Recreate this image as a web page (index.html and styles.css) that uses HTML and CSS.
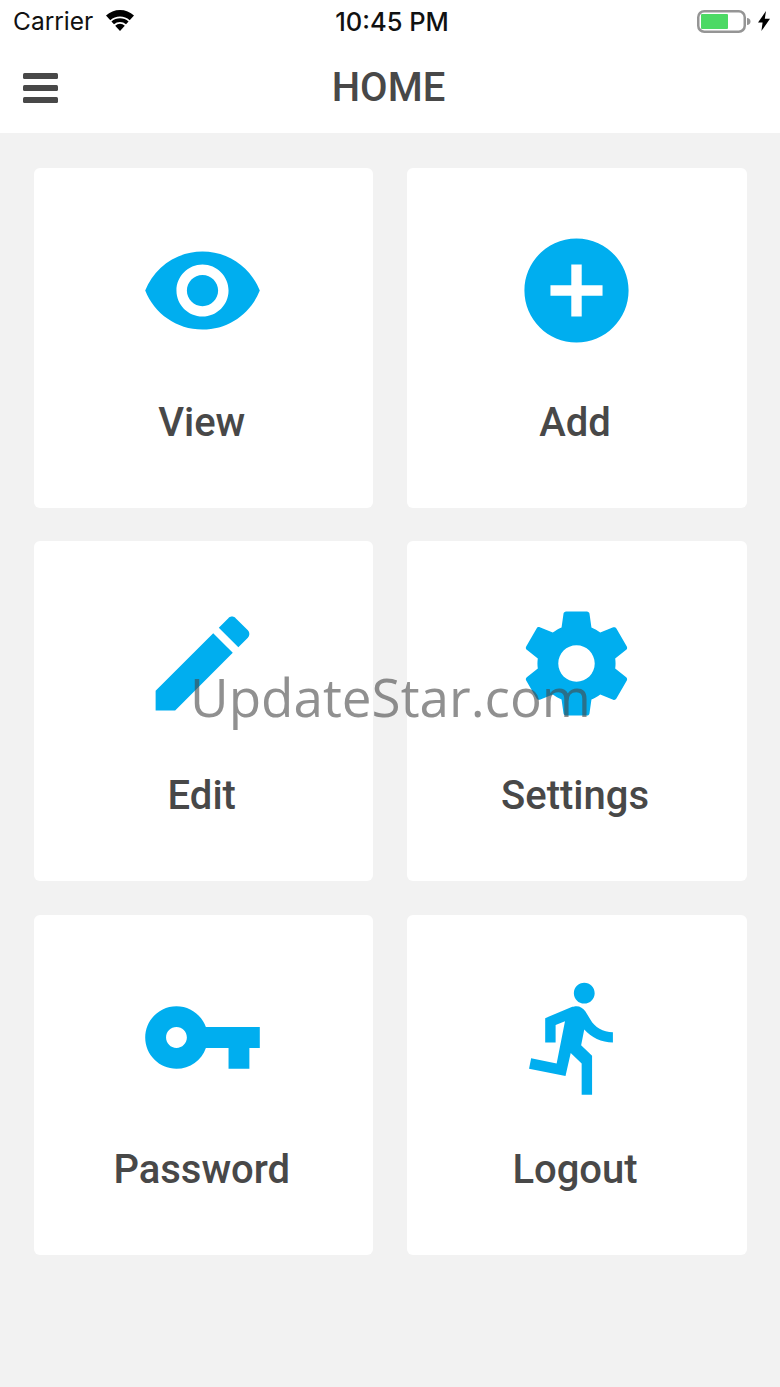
FILE: index.html
```html
<!DOCTYPE html>
<html lang="en">
<head>
    <meta charset="UTF-8">
    <meta name="viewport" content="width=device-width, initial-scale=1.0">
    <title>Home</title>
    <link rel="stylesheet" href="styles.css">
</head>
<body>
    <header class="top">
        <div class="status-bar">
            <div class="status-left">
                <span class="carrier">Carrier</span>
                <svg class="wifi" viewBox="0 0 28 21">
                    <path d="M14 21l-4.800-5.300a7 7 0 0 1 9.600 0z"/>
                    <path d="M8 14.300L5.400 11.400a13 13 0 0 1 17.200 0L20 14.300a9.200 9.200 0 0 0-12 0z"/>
                    <path d="M4.300 10.200L0 5.600a20.500 20.500 0 0 1 28 0l-4.300 4.600a14.800 14.800 0 0 0-19.400 0z"/>
                </svg>
            </div>
            <span class="clock">10:45 PM</span>
            <div class="status-right">
                <svg class="battery" viewBox="0 0 55 23">
                    <rect x="1.250" y="1.250" width="46.500" height="20.500" rx="6" fill="none" stroke="#959595" stroke-width="2.500"/>
                    <rect x="4" y="4" width="27" height="15" rx="1" fill="#4cd964"/>
                    <path d="M50 8c2 0 3.500 1.500 3.500 3.500S52 15 50 15z" fill="#959595"/>
                </svg>
                <svg class="bolt" viewBox="0 0 12 20">
                    <path d="M8 0L0 11.500h4.600L3.400 20 12 7.800H6.800z"/>
                </svg>
            </div>
        </div>
        <nav class="nav-bar">
            <svg class="menu-icon" viewBox="0 0 35 30">
                <rect y="0" width="35" height="6" rx="1.500"/>
                <rect y="12" width="35" height="6" rx="1.500"/>
                <rect y="24" width="35" height="6" rx="1.500"/>
            </svg>
            <h1>HOME</h1>
        </nav>
    </header>

    <main class="grid">
        <a class="tile">
            <svg class="tile-icon" viewBox="0 0 24 24"><path d="M12 4.500C7 4.500 2.730 7.610 1 12c1.730 4.390 6 7.500 11 7.500s9.270-3.110 11-7.500c-1.730-4.390-6-7.500-11-7.500zM12 17c-2.760 0-5-2.240-5-5s2.240-5 5-5 5 2.240 5 5-2.240 5-5 5zm0-8c-1.660 0-3 1.340-3 3s1.340 3 3 3 3-1.340 3-3-1.340-3-3-3z"/></svg>
            <span class="tile-label">View</span>
        </a>
        <a class="tile">
            <svg class="tile-icon" viewBox="0 0 24 24"><path d="M12 2C6.480 2 2 6.480 2 12s4.480 10 10 10 10-4.480 10-10S17.520 2 12 2zm5 11h-4v4h-2v-4H7v-2h4V7h2v4h4v2z"/></svg>
            <span class="tile-label">Add</span>
        </a>
        <a class="tile">
            <svg class="tile-icon" viewBox="0 0 24 24"><path d="M3 17.250V21h3.750L17.810 9.940l-3.750-3.750L3 17.250zM20.710 7.040c.39-.39.39-1.020 0-1.410l-2.340-2.340c-.39-.39-1.020-.39-1.410 0l-1.830 1.830 3.750 3.750 1.830-1.830z"/></svg>
            <span class="tile-label">Edit</span>
        </a>
        <a class="tile">
            <svg class="tile-icon" viewBox="0 0 24 24"><path d="M19.430 12.980c.04-.32.07-.64.07-.98s-.03-.66-.07-.98l2.110-1.650c.19-.15.24-.42.12-.64l-2-3.460c-.12-.22-.39-.3-.61-.22l-2.490 1c-.52-.4-1.080-.73-1.690-.98l-.38-2.650C14.460 2.180 14.250 2 14 2h-4c-.25 0-.46.18-.49.42l-.38 2.650c-.61.25-1.170.59-1.690.98l-2.490-1c-.23-.09-.49 0-.61.22l-2 3.460c-.13.22-.07.49.12.64l2.110 1.650c-.04.32-.07.65-.07.98s.03.66.07.98l-2.110 1.650c-.19.15-.24.42-.12.64l2 3.460c.12.22.39.3.61.22l2.490-1c.52.4 1.080.73 1.690.98l.38 2.650c.03.24.24.42.49.42h4c.25 0 .46-.18.49-.42l.38-2.650c.61-.25 1.170-.59 1.690-.98l2.490 1c.23.09.49 0 .61-.22l2-3.460c.12-.22.07-.49-.12-.64l-2.110-1.650zM12 15.500c-1.930 0-3.500-1.570-3.500-3.500s1.570-3.500 3.500-3.500 3.500 1.570 3.500 3.500-1.570 3.500-3.500 3.500z"/></svg>
            <span class="tile-label">Settings</span>
        </a>
        <a class="tile">
            <svg class="tile-icon" viewBox="0 0 24 24"><path d="M12.650 10C11.830 7.670 9.610 6 7 6c-3.310 0-6 2.690-6 6s2.690 6 6 6c2.610 0 4.830-1.670 5.650-4H17v4h4v-4h2v-4H12.650zM7 14c-1.100 0-2-.9-2-2s.9-2 2-2 2 .9 2 2-.9 2-2 2z"/></svg>
            <span class="tile-label">Password</span>
        </a>
        <a class="tile">
            <svg class="tile-icon" viewBox="0 0 24 24"><path d="M13.490 5.480c1.100 0 2-.9 2-2s-.9-2-2-2-2 .9-2 2 .9 2 2 2zm-3.600 13.900l1-4.400 2.100 2v6h2v-7.500l-2.100-2 .6-3c1.300 1.500 3.300 2.500 5.500 2.500v-2c-1.900 0-3.500-1-4.300-2.400l-1-1.600c-.4-.6-1-1-1.700-1-.3 0-.5.1-.8.1l-5.200 2.200v4.700h2v-3.400l1.800-.7-1.600 8.100-4.900-1-.4 2 7 1.400z"/></svg>
            <span class="tile-label">Logout</span>
        </a>
    </main>

    <div class="watermark">UpdateStar.com</div>
</body>
</html>
```

FILE: styles.css
```css
* {
    box-sizing: border-box;
}
body {
    margin: 0;
    min-height: 100vh;
    background: #f2f2f2;
    font-family: Roboto, "Liberation Sans", sans-serif;
    color: #484848;
    position: relative;
}
.top {
    background: #fff;
    height: 133px;
}
.status-bar {
    height: 44px;
    display: flex;
    align-items: center;
    justify-content: space-between;
    position: relative;
    padding: 0 10px 2px 13px;
    color: #111;
    font-family: Inter, "Liberation Sans", sans-serif;
}
.status-left {
    display: flex;
    align-items: center;
    gap: 13px;
}
.carrier {
    font-size: 24.500px;
}
.wifi {
    width: 28px;
    height: 21px;
    margin-bottom: 2px;
}
.clock {
    position: absolute;
    left: 0;
    right: -4px;
    text-align: center;
    font-size: 25.500px;
    font-weight: 500;
}
.status-right {
    display: flex;
    align-items: center;
    gap: 6px;
}
.battery {
    width: 55px;
    height: 23px;
}
.bolt {
    width: 12px;
    height: 20px;
}
.nav-bar {
    height: 87px;
    display: flex;
    align-items: center;
    justify-content: center;
    position: relative;
    padding-right: 3px;
}
.nav-bar h1 {
    margin: 0;
    font-size: 40px;
    font-weight: 500;
}
.menu-icon {
    position: absolute;
    left: 23px;
    top: 29px;
    width: 35px;
    height: 30px;
    fill: #484848;
}
.grid {
    display: grid;
    grid-template-columns: 339.500px 340px;
    grid-auto-rows: 340px;
    column-gap: 33.500px;
    row-gap: 33.500px;
    padding: 34.600px 0 0 33.500px;
}
.tile {
    background: #fff;
    border-radius: 6px;
    display: flex;
    flex-direction: column;
    align-items: center;
    padding: 60px 1px 0 0;
}
.tile-icon {
    width: 125px;
    height: 125px;
    fill: #00aeef;
}
.tile-label {
    margin-top: 47px;
    font-size: 40px;
    line-height: 46px;
    font-weight: 500;
    position: relative;
    left: -1px;
}
.watermark {
    position: absolute;
    left: 190px;
    top: 660px;
    font-family: "Open Sans", "Noto Sans", sans-serif;
    font-size: 53px;
    line-height: 74px;
    color: rgba(70, 70, 70, 0.6);
}
```
